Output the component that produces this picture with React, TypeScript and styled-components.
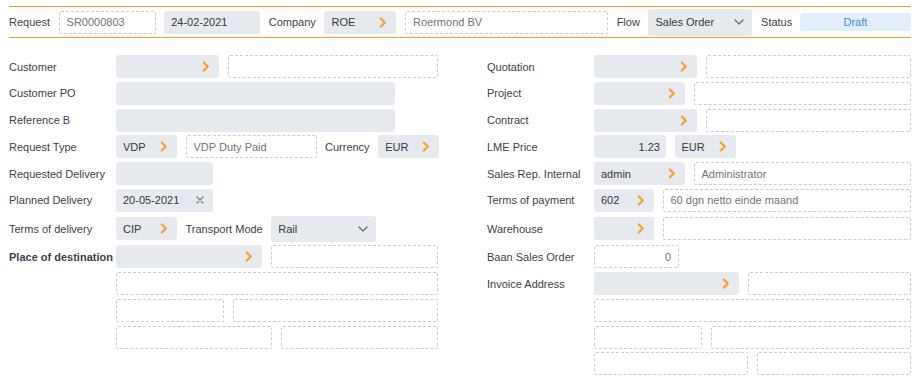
import React, { ReactNode } from "react";
import styled, { createGlobalStyle, css } from "styled-components";

const GlobalStyle = createGlobalStyle`
    body {
        margin: 0;
        background: #ffffff;
        font-family: "Liberation Sans", Arial, sans-serif;
        font-size: 11px;
        color: #3d4249;
    }
`;

const ORANGE = "#f5a12b";

const Page = styled.div`
    padding: 6px 5px 0 9px;
`;

const Header = styled.div`
    height: 30px;
    border-top: 1px solid ${ORANGE};
    border-bottom: 1px solid ${ORANGE};
    display: flex;
    align-items: center;
    gap: 8.6px;
`;

const Label = styled.span<{ $bold?: boolean }>`
    color: #3d4249;
    white-space: nowrap;
    font-weight: ${(p) => (p.$bold ? "bold" : "normal")};
`;

const fieldBase = css<{ $w?: number; $h?: number; $right?: boolean }>`
    box-sizing: border-box;
    height: ${(p) => p.$h ?? 23}px;
    ${(p) => (p.$w ? `width: ${p.$w}px; flex: none;` : "flex: 1; min-width: 0;")}
    display: flex;
    align-items: center;
    justify-content: ${(p) => (p.$right ? "flex-end" : "space-between")};
    padding: 0 7px;
    white-space: nowrap;
`;

const DashedField = styled.div<{ $w?: number; $h?: number; $right?: boolean }>`
    ${fieldBase}
    border: 1px dashed #c8cbcf;
    border-radius: 2px;
    color: #6f757c;
`;

const FilledField = styled.div<{ $w?: number; $h?: number; $right?: boolean }>`
    ${fieldBase}
    background: #e6e9ed;
    border-radius: 3px;
    color: #343a40;
    padding-right: 9px;
`;

const StatusBadge = styled.div`
    flex: 1;
    height: 18px;
    margin-left: -1px;
    border-radius: 3px;
    background: #e4eefb;
    color: #3a8de6;
    display: flex;
    align-items: center;
    justify-content: center;
`;

const Form = styled.div`
    margin-top: 17px;
    display: grid;
    grid-template-columns: 429px 424px;
    column-gap: 49px;
    align-items: start;
`;

const Column = styled.div`
    display: flex;
    flex-direction: column;
    gap: 3.75px;
`;

const Row = styled.div<{ $h?: number }>`
    height: ${(p) => p.$h ?? 23}px;
    display: grid;
    grid-template-columns: 107px 1fr;
    align-items: center;
`;

const Fields = styled.div`
    display: flex;
    align-items: center;
    gap: 8.5px;
`;

const IconWrap = styled.span`
    display: flex;
    align-items: center;
    flex: none;
`;

const ChevronRight = () => (
    <IconWrap>
        <svg width="8" height="11" viewBox="0 0 8 11">
            <path d="M1.8 1.5 L5.8 5.5 L1.8 9.5" fill="none" stroke={ORANGE} strokeWidth="2.2" strokeLinecap="round" strokeLinejoin="round" />
        </svg>
    </IconWrap>
);

const ChevronDown = () => (
    <IconWrap>
        <svg width="10" height="6" viewBox="0 0 10 6">
            <path d="M1 1 L5 5 L9 1" fill="none" stroke="#6b7178" strokeWidth="1.4" strokeLinecap="round" strokeLinejoin="round" />
        </svg>
    </IconWrap>
);

const Cross = () => (
    <IconWrap>
        <svg width="8" height="8" viewBox="0 0 8 8">
            <path d="M1 1 L7 7 M7 1 L1 7" fill="none" stroke="#7a8087" strokeWidth="1.3" strokeLinecap="round" />
        </svg>
    </IconWrap>
);

const Lookup = (props: { w: number; value?: string; h?: number }) => (
    <FilledField $w={props.w} $h={props.h}>
        <span>{props.value ?? ""}</span>
        <ChevronRight />
    </FilledField>
);

const Select = (props: { w: number; value: string; h: number }) => (
    <FilledField $w={props.w} $h={props.h} style={{ paddingRight: 8 }}>
        <span>{props.value}</span>
        <ChevronDown />
    </FilledField>
);

const FormRow = (props: { label?: string; bold?: boolean; h?: number; children: ReactNode }) => (
    <Row $h={props.h}>
        <Label $bold={props.bold}>{props.label ?? ""}</Label>
        <Fields>{props.children}</Fields>
    </Row>
);

export default function App() {
    return (
        <>
            <GlobalStyle />
            <Page>
                <Header>
                    <Label>Request</Label>
                    <DashedField $w={97}>SR0000803</DashedField>
                    <FilledField $w={96}>24-02-2021</FilledField>
                    <Label>Company</Label>
                    <Lookup w={72} value="ROE" />
                    <DashedField $w={203}>Roermond BV</DashedField>
                    <Label>Flow</Label>
                    <Select w={104} h={27} value="Sales Order" />
                    <Label>Status</Label>
                    <StatusBadge>Draft</StatusBadge>
                </Header>
                <Form>
                    <Column>
                        <FormRow label="Customer">
                            <Lookup w={103} />
                            <DashedField />
                        </FormRow>
                        <FormRow label="Customer PO">
                            <FilledField $w={279} />
                        </FormRow>
                        <FormRow label="Reference B">
                            <FilledField $w={279} />
                        </FormRow>
                        <FormRow label="Request Type">
                            <Lookup w={61} value="VDP" />
                            <DashedField $w={131}>VDP Duty Paid</DashedField>
                            <Label>Currency</Label>
                            <Lookup w={61} value="EUR" />
                        </FormRow>
                        <FormRow label="Requested Delivery">
                            <FilledField $w={97} />
                        </FormRow>
                        <FormRow label="Planned Delivery">
                            <FilledField $w={97}>
                                <span>20-05-2021</span>
                                <Cross />
                            </FilledField>
                        </FormRow>
                        <FormRow label="Terms of delivery" h={26}>
                            <Lookup w={61} value="CIP" />
                            <Label>Transport Mode</Label>
                            <Select w={105} h={26} value="Rail" />
                        </FormRow>
                        <FormRow label="Place of destination" bold>
                            <Lookup w={146} />
                            <DashedField />
                        </FormRow>
                        <FormRow>
                            <DashedField />
                        </FormRow>
                        <FormRow>
                            <DashedField $w={108} />
                            <DashedField />
                        </FormRow>
                        <FormRow>
                            <DashedField $w={156} />
                            <DashedField />
                        </FormRow>
                    </Column>
                    <Column>
                        <FormRow label="Quotation">
                            <Lookup w={103} />
                            <DashedField />
                        </FormRow>
                        <FormRow label="Project">
                            <Lookup w={91} />
                            <DashedField />
                        </FormRow>
                        <FormRow label="Contract">
                            <Lookup w={103} />
                            <DashedField />
                        </FormRow>
                        <FormRow label="LME Price">
                            <FilledField $w={72} $right style={{ paddingRight: 6 }}>
                                1.23
                            </FilledField>
                            <Lookup w={61} value="EUR" />
                        </FormRow>
                        <FormRow label="Sales Rep. Internal">
                            <Lookup w={91} value="admin" />
                            <DashedField>Administrator</DashedField>
                        </FormRow>
                        <FormRow label="Terms of payment">
                            <Lookup w={60} value="602" />
                            <DashedField>60 dgn netto einde maand</DashedField>
                        </FormRow>
                        <FormRow label="Warehouse" h={26}>
                            <Lookup w={60} />
                            <DashedField />
                        </FormRow>
                        <FormRow label="Baan Sales Order">
                            <DashedField $w={85} $right>
                                0
                            </DashedField>
                        </FormRow>
                        <FormRow label="Invoice Address">
                            <Lookup w={145} />
                            <DashedField />
                        </FormRow>
                        <FormRow>
                            <DashedField />
                        </FormRow>
                        <FormRow>
                            <DashedField $w={108} />
                            <DashedField />
                        </FormRow>
                        <FormRow>
                            <DashedField $w={154} />
                            <DashedField />
                        </FormRow>
                    </Column>
                </Form>
            </Page>
        </>
    );
}
